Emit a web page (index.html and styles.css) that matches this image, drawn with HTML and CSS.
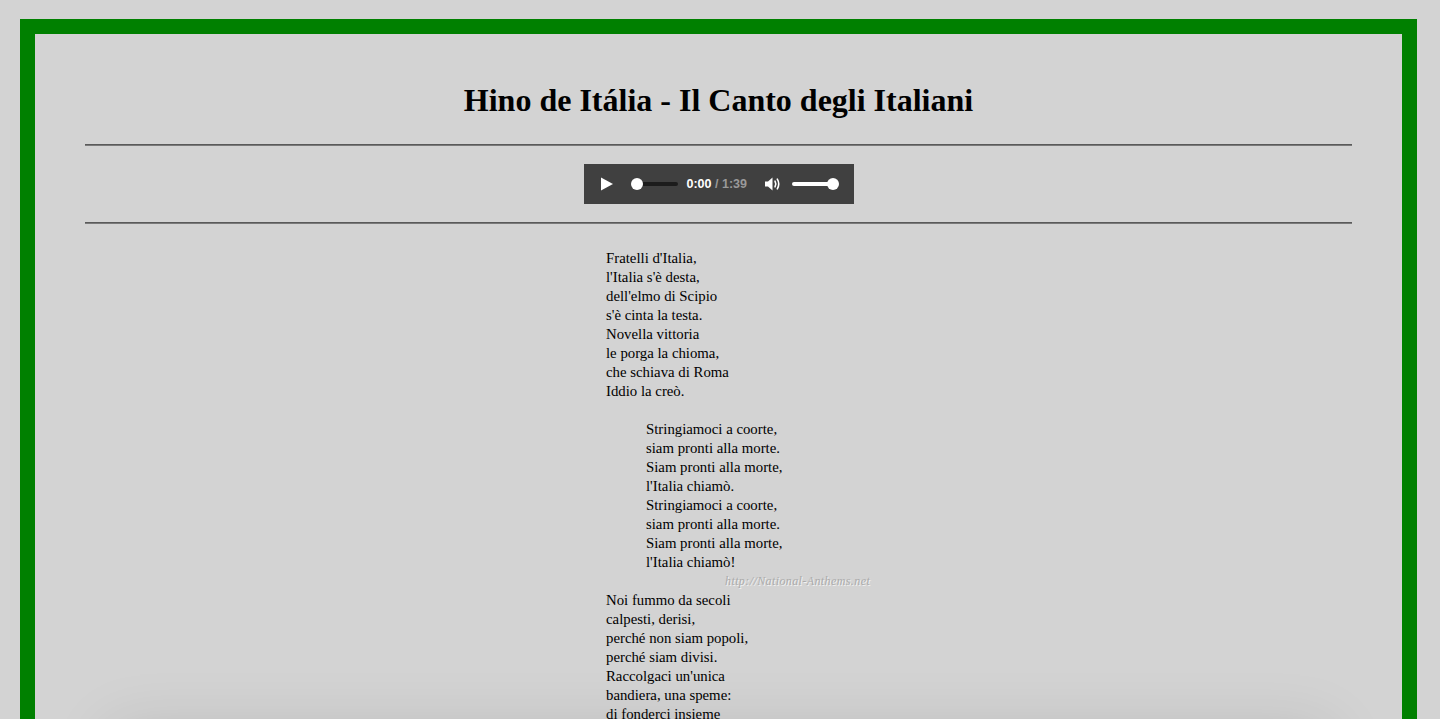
FILE: index.html
```html
<!DOCTYPE html>
<html lang="it">
<head>
<meta charset="utf-8">
<title>Hino de Itália - Il Canto degli Italiani</title>
<link rel="stylesheet" href="styles.css">
</head>
<body>
<div class="frame">
  <h1 class="title">Hino de Itália - Il Canto degli Italiani</h1>
  <hr class="rule">
  <div class="player-row">
    <div class="player">
      <svg class="play" width="14" height="16" viewBox="0 0 14 16"><path d="M1 1.5 L13 8 L1 14.5 Z" fill="#fff"/></svg>
      <div class="seek"><span class="seek-thumb"></span></div>
      <div class="time"><span class="cur">0:00</span><span class="dur"> / 1:39</span></div>
      <svg class="vol-icon" width="18" height="16" viewBox="0 0 18 16">
        <path d="M1 5.5 H4 L8.5 1.5 V14.5 L4 10.5 H1 Z" fill="#fff"/>
        <path d="M11 5.2 Q12.6 8 11 10.8" stroke="#fff" stroke-width="1.6" fill="none" stroke-linecap="round"/>
        <path d="M13.3 3.2 Q16.2 8 13.3 12.8" stroke="#fff" stroke-width="1.6" fill="none" stroke-linecap="round"/>
      </svg>
      <div class="volume"><span class="vol-thumb"></span></div>
    </div>
  </div>
  <hr class="rule">
  <div class="lyrics">
    <div class="stanza">
      Fratelli d'Italia,<br>
      l'Italia s'è desta,<br>
      dell'elmo di Scipio<br>
      s'è cinta la testa.<br>
      Novella vittoria<br>
      le porga la chioma,<br>
      che schiava di Roma<br>
      Iddio la creò.
    </div>
    <div class="blank"></div>
    <div class="chorus">
      Stringiamoci a coorte,<br>
      siam pronti alla morte.<br>
      Siam pronti alla morte,<br>
      l'Italia chiamò.<br>
      Stringiamoci a coorte,<br>
      siam pronti alla morte.<br>
      Siam pronti alla morte,<br>
      l'Italia chiamò!
    </div>
    <div class="watermark">http://National-Anthems.net</div>
    <div class="stanza">
      Noi fummo da secoli<br>
      calpesti, derisi,<br>
      perché non siam popoli,<br>
      perché siam divisi.<br>
      Raccolgaci un'unica<br>
      bandiera, una speme:<br>
      di fonderci insieme<br>
      già l'ora suonò.
    </div>
    <div class="blank"></div>
    <div class="chorus">
      Stringiamoci a coorte,<br>
      siam pronti alla morte.<br>
      Siam pronti alla morte,<br>
      l'Italia chiamò.<br>
      Stringiamoci a coorte,<br>
      siam pronti alla morte.<br>
      Siam pronti alla morte,<br>
      l'Italia chiamò!
    </div>
    <div class="blank"></div>
  </div>
</div>
<div class="bottom-shade"></div>
</body>
</html>
```
FILE: styles.css
```css
html, body {
  margin: 0;
  padding: 0;
  background: #d3d3d3;
}
body {
  font-family: "Liberation Serif", "Times New Roman", serif;
  color: #000;
  padding: 19px 23px 20px 20px;
}
.frame {
  border: 15px solid #008000;
  background: #d3d3d3;
  padding-bottom: 40px;
}
.title {
  margin: 48px 0 25px;
  font-size: 32px;
  line-height: 37px;
  font-weight: bold;
  text-align: center;
}
.rule {
  margin: 0 50px;
  height: 0;
  border: 0;
  border-top: 1px solid #5a5a5a;
  border-bottom: 1px solid #7a7a7a;
}
.player-row {
  display: flex;
  justify-content: center;
  padding: 18px 0;
}
.player {
  width: 270px;
  height: 40px;
  background: #404040;
  display: flex;
  align-items: center;
  box-sizing: border-box;
  padding-left: 16px;
  font-family: "Liberation Sans", Arial, sans-serif;
}
.play {
  display: block;
  flex: none;
  width: 14px;
  height: 16px;
}
.seek {
  position: relative;
  margin-left: 22px;
  width: 42px;
  height: 4px;
  border-radius: 2px;
  background: #1c1c1c;
}
.seek-thumb {
  position: absolute;
  left: -5px;
  top: -4px;
  width: 12px;
  height: 12px;
  border-radius: 50%;
  background: #fff;
}
.time {
  margin-left: 9px;
  font-size: 12.5px;
  white-space: nowrap;
}
.cur {
  color: #fff;
  font-weight: bold;
}
.dur {
  color: #9a9a9a;
  font-weight: bold;
}
.vol-icon {
  display: block;
  flex: none;
  margin-left: 17px;
}
.volume {
  position: relative;
  margin-left: 10px;
  width: 42px;
  height: 4px;
  border-radius: 2px;
  background: #fff;
}
.vol-thumb {
  position: absolute;
  right: -5px;
  top: -4px;
  width: 12px;
  height: 12px;
  border-radius: 50%;
  background: #fff;
}
.lyrics {
  width: 226px;
  margin: 25px auto 0;
  font-size: 14.8px;
  line-height: 19px;
  padding-left: 1px;
}
.blank {
  height: 19px;
}
.chorus {
  padding-left: 40px;
}
.watermark {
  height: 19px;
  line-height: 19px;
  padding-left: 119px;
  white-space: nowrap;
  font-family: "Liberation Serif", "Times New Roman", serif;
  font-style: italic;
  font-size: 12px;
  color: #ababab;
  text-shadow: 1px 1px 0 #f2f2f2;
  letter-spacing: 0.4px;
}
.bottom-shade {
  position: fixed;
  left: 130px;
  right: 130px;
  top: 750px;
  height: 200px;
  box-shadow: 0 0 60px 20px rgba(0, 0, 0, 0.12);
  pointer-events: none;
}
```
